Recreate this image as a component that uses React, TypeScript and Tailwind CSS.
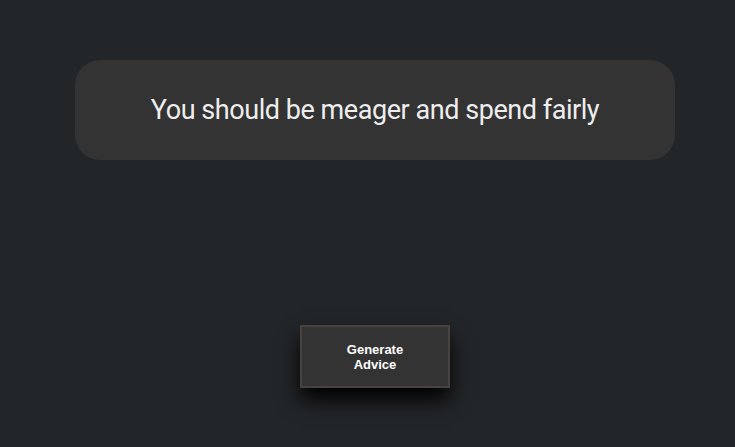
export default function App() {
  return (
    <div className="min-h-[447px] w-full bg-[#232629] flex flex-col items-center pt-[60px] pl-[15px]">
      <div className="w-[600px] h-[100px] rounded-[25px] bg-[#333333] flex items-center justify-center">
        <p className="font-['Roboto',sans-serif] text-[27px] tracking-[-0.45px] text-[#eeeeee]">
          You should be meager and spend fairly
        </p>
      </div>
      <button className="mt-[165px] w-[150px] h-[63px] bg-[#333333] border-2 border-[#4a4240] shadow-[0_12px_20px_rgba(0,0,0,1)] font-['Liberation_Sans',Arial,sans-serif] font-bold text-[13px] leading-[15px] text-white">
        Generate
        <br />
        Advice
      </button>
    </div>
  )
}
